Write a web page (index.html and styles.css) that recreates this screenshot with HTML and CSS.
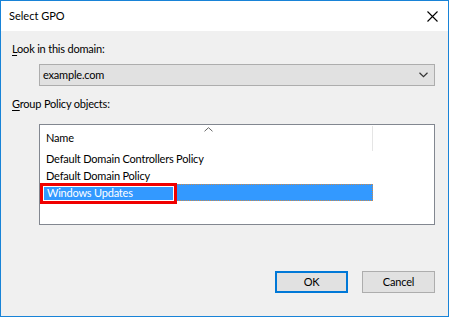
FILE: index.html
```html
<!DOCTYPE html>
<html>
<head>
<meta charset="utf-8">
<link rel="stylesheet" href="styles.css">
</head>
<body>
<div class="window">
  <div class="titlebar">
    <span class="title">Select GPO</span>
    <svg class="close" width="11" height="11" viewBox="0 0 11 11"><path d="M0.5 0.5 L10.5 10.5 M10.5 0.5 L0.5 10.5" stroke="#000" stroke-width="1.1" fill="none"/></svg>
  </div>
  <div class="content">
    <div class="label label-first"><u>L</u>ook in this domain:</div>
    <div class="combo">
      <span class="combo-text">example.com</span>
      <svg class="chevron" width="9" height="6" viewBox="0 0 9 6"><path d="M0.5 0.8 L4.5 4.6 L8.5 0.8" stroke="#333" stroke-width="1.2" fill="none"/></svg>
    </div>
    <div class="label label-second"><u>G</u>roup Policy objects:</div>
    <div class="list">
      <div class="list-header">
        <div class="col-name">
          <svg class="sort" width="9" height="5" viewBox="0 0 9 5"><path d="M0.5 4.3 L4.5 0.7 L8.5 4.3" stroke="#666" stroke-width="1" fill="none"/></svg>
          <span>Name</span>
        </div>
        <div class="col-rest"></div>
      </div>
      <div class="row">Default Domain Controllers Policy</div>
      <div class="row">Default Domain Policy</div>
      <div class="row selected">Windows Updates</div>
      <div class="highlight"></div>
    </div>
    <div class="buttons">
      <div class="btn btn-default">OK</div>
      <div class="btn">Cancel</div>
    </div>
  </div>
</div>
</body>
</html>
```
FILE: styles.css
```css
* { box-sizing: border-box; }
html, body { margin: 0; padding: 0; }
body {
  width: 449px;
  height: 317px;
  font-family: "Lato", "Liberation Sans", sans-serif;
  font-size: 11px;
  letter-spacing: -0.2px;
  color: #000;
  overflow: hidden;
}
.window {
  width: 449px;
  height: 317px;
  border: 1px solid #1883d7;
  display: flex;
  flex-direction: column;
  background: #f0f0f0;
}
.titlebar {
  height: 30px;
  background: #fff;
  display: flex;
  align-items: center;
  justify-content: space-between;
  padding: 0 10px 0 8px;
  flex: none;
}
.title { line-height: 16px; letter-spacing: 0; }
.close { display: block; }
.content {
  flex: 1;
  padding: 0 13px 0 11px;
  display: flex;
  flex-direction: column;
}
.label { line-height: 16px; height: 16px; }
.label u { text-decoration: underline; text-underline-offset: 2px; }
.label-first { margin-top: 10px; }
.combo {
  margin-top: 7px;
  margin-left: 27px;
  height: 22px;
  border: 1px solid #adadad;
  background: #e1e1e1;
  display: flex;
  align-items: center;
  justify-content: space-between;
  padding: 0 6px 0 3px;
}
.combo-text { line-height: 16px; }
.chevron { display: block; }
.label-second { margin-top: 10px; }
.list {
  position: relative;
  margin-top: 12px;
  margin-left: 27px;
  height: 101px;
  border: 1px solid #828790;
  background: #fff;
}
.list-header {
  height: 25px;
  display: flex;
}
.col-name {
  position: relative;
  width: 333px;
  height: 25px;
  border-right: 1px solid #e5e5e5;
  margin-top: 1px;
  padding-left: 6px;
  padding-bottom: 2px;
  display: flex;
  align-items: center;
}
.col-name span { line-height: 16px; }
.sort {
  position: absolute;
  left: 164px;
  top: 1px;
}
.col-rest { flex: 1; }
.row {
  height: 17px;
  line-height: 17px;
  padding-left: 6px;
  width: 333px;
}
.row.selected {
  margin-left: 3px;
  width: 330px;
  padding-left: 3px;
  background: #3399ff;
  color: #fff;
  border: 1px dotted #cc8a4a;
  line-height: 15px;
}
.highlight {
  position: absolute;
  left: 0px;
  top: 58px;
  width: 137px;
  height: 21px;
  border: 3px solid #f00000;
  box-shadow: inset 0 0 0 1px #fff;
}
.buttons {
  margin-top: 46px;
  display: flex;
  justify-content: flex-end;
  gap: 14px;
}
.btn {
  width: 73px;
  height: 22px;
  border: 1px solid #adadad;
  background: #e1e1e1;
  display: flex;
  align-items: center;
  justify-content: center;
  line-height: 16px;
}
.btn-default { border: 2px solid #0078d7; }
```
